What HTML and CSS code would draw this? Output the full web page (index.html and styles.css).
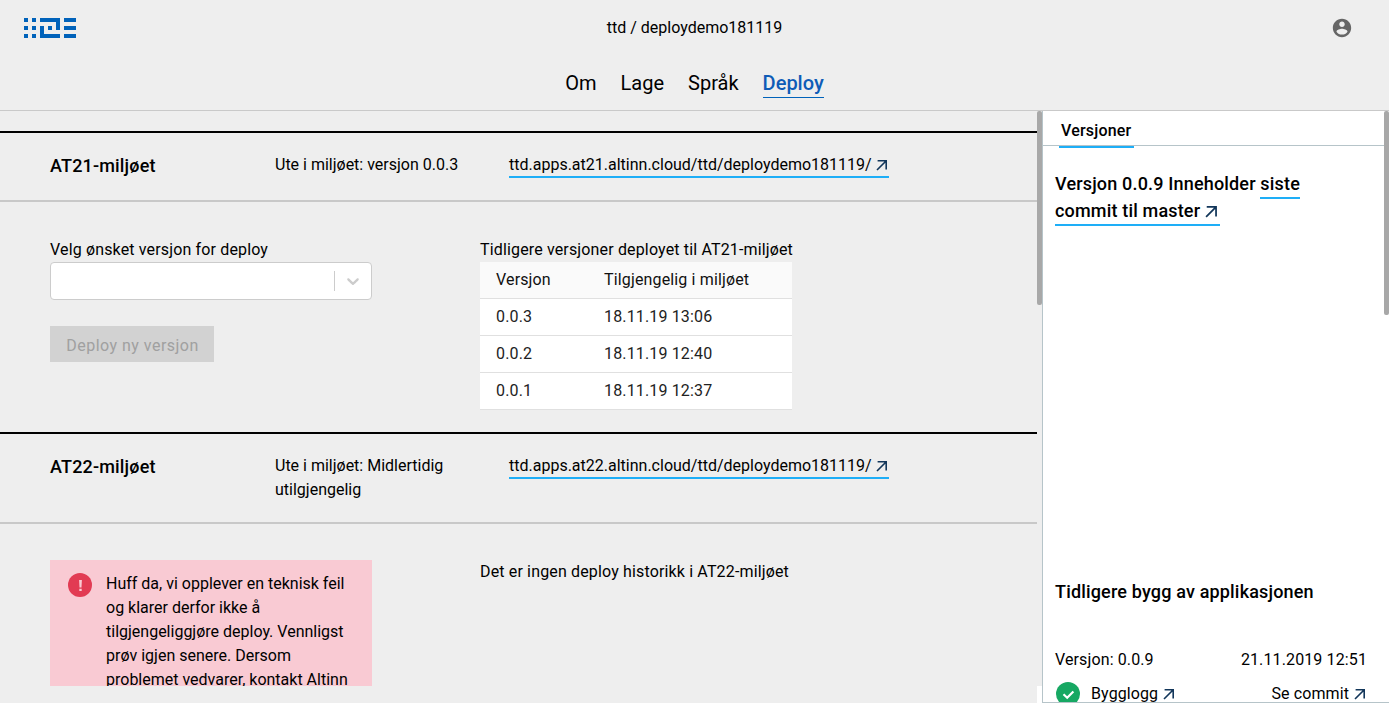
FILE: index.html
```html
<!DOCTYPE html>
<html lang="nb">
<head>
<meta charset="utf-8">
<title>Deploy</title>
<link rel="stylesheet" href="styles.css">
</head>
<body>
<svg class="symbols" width="0" height="0">
  <symbol id="arrow" viewBox="0 0 12 12"><path d="M1.600 1.800H10.200V10.600M10 2L1 11" fill="none" stroke="#12365a" stroke-width="1.600"/></symbol>
</svg>
<header class="top">
  <div class="top-row">
    <svg class="logo" width="52" height="20" viewBox="0 0 52 20" shape-rendering="crispEdges" fill="#0062ba">
      <path d="M0 0h4v4H0zM8 0h4v4H8zM0 8h4v4H0zM8 8h4v4H8zM0 16h4v4H0zM8 16h4v4H8zM16 0h20v12h-4V4H16zM16 8h4v8h16v4H16zM24 8h4v4h-4zM40 0h12v4H40zM40 8h12v4H40zM40 16h12v4H40z"/>
    </svg>
    <div class="repo">ttd / deploydemo181119</div>
    <svg class="user" width="22" height="22" viewBox="0 0 24 24" fill="#666"><path d="M12 2C6.48 2 2 6.48 2 12s4.48 10 10 10 10-4.48 10-10S17.52 2 12 2zm0 3c1.66 0 3 1.34 3 3s-1.34 3-3 3-3-1.34-3-3 1.340-3 3-3zm0 14.200c-2.500 0-4.710-1.280-6-3.220.03-1.990 4-3.080 6-3.080 1.990 0 5.970 1.090 6 3.080-1.290 1.940-3.500 3.220-6 3.220z"/></svg>
  </div>
  <nav class="tabs">
    <a class="tab">Om</a><a class="tab">Lage</a><a class="tab">Språk</a><a class="tab active">Deploy</a>
  </nav>
</header>
<div class="page">
  <main class="envs">
    <section class="env">
      <div class="env-head">
        <h2 class="env-name">AT21-miljøet</h2>
        <p class="env-status">Ute i miljøet: versjon 0.0.3</p>
        <div class="env-url"><a class="link">ttd.apps.at21.altinn.cloud/ttd/deploydemo181119/<svg class="arrow"><use href="#arrow"/></svg></a></div>
      </div>
      <div class="env-body">
        <div class="deploy">
          <label class="label">Velg ønsket versjon for deploy</label>
          <div class="select">
            <span class="divider"></span>
            <svg class="chevron" width="20" height="20" viewBox="0 0 20 20" fill="#ccc"><path d="M4.516 7.548c0.436-0.446 1.043-0.481 1.576 0l3.908 3.747 3.908-3.747c0.533-0.481 1.141-0.446 1.574 0 0.436 0.445 0.408 1.197 0 1.615-0.406 0.418-4.695 4.502-4.695 4.502-0.217 0.223-0.502 0.335-0.787 0.335s-0.570-0.112-0.789-0.335c0 0-4.287-4.084-4.695-4.502s-0.436-1.170 0-1.615z"/></svg>
          </div>
          <button class="btn" disabled>Deploy ny versjon</button>
        </div>
        <div class="history">
          <div class="label">Tidligere versjoner deployet til AT21-miljøet</div>
          <div class="table">
            <div class="tr th"><span>Versjon</span><span>Tilgjengelig i miljøet</span></div>
            <div class="tr"><span>0.0.3</span><span>18.11.19 13:06</span></div>
            <div class="tr"><span>0.0.2</span><span>18.11.19 12:40</span></div>
            <div class="tr"><span>0.0.1</span><span>18.11.19 12:37</span></div>
          </div>
        </div>
      </div>
    </section>
    <section class="env">
      <div class="env-head">
        <h2 class="env-name">AT22-miljøet</h2>
        <p class="env-status">Ute i miljøet: Midlertidig<br>utilgjengelig</p>
        <div class="env-url"><a class="link">ttd.apps.at22.altinn.cloud/ttd/deploydemo181119/<svg class="arrow"><use href="#arrow"/></svg></a></div>
      </div>
      <div class="env-body">
        <div class="alert">
          <svg class="alert-icon" width="24" height="24" viewBox="0 0 24 24"><circle cx="12" cy="12" r="12" fill="#e23b53"/><path d="M11.100 7h2.800l-.4 7.400h-2zM11.300 15.800h2.400v2.200h-2.400z" fill="#f9cad3"/></svg>
          <p class="alert-text">Huff da, vi opplever en teknisk feil<br>og klarer derfor ikke å<br>tilgjengeliggjøre deploy. Vennligst<br>prøv igjen senere. Dersom<br>problemet vedvarer, kontakt Altinn</p>
        </div>
        <p class="label">Det er ingen deploy historikk i AT22-miljøet</p>
      </div>
    </section>
  </main>
  <div class="gutter"><div class="thumb thumb-left"></div></div>
  <aside class="panel">
    <div class="panel-main">
      <div class="panel-tabs"><span class="panel-tab">Versjoner</span></div>
      <div class="panel-body">
        <h3 class="release">Versjon 0.0.9 Inneholder <a class="link">siste</a><br><a class="link">commit til master<svg class="arrow"><use href="#arrow"/></svg></a></h3>
        <h3 class="builds-title">Tidligere bygg av applikasjonen</h3>
        <div class="row build"><span>Versjon: 0.0.9</span><span>21.11.2019 12:51</span></div>
        <div class="row logs">
          <svg class="ok" width="24" height="24" viewBox="0 0 24 24"><circle cx="12" cy="12" r="12" fill="#17a863"/><path d="M7.500 12.200l3.700 3.500 6.200-6.200" fill="none" stroke="#fff" stroke-width="2.200"/></svg>
          <span class="log">Bygglogg<svg class="arrow"><use href="#arrow"/></svg></span>
          <span class="commit">Se commit<svg class="arrow"><use href="#arrow"/></svg></span>
        </div>
      </div>
    </div>
    <div class="thumb thumb-right"></div>
  </aside>
</div>
</body>
</html>
```
FILE: styles.css
```css
* { box-sizing: border-box; }
body, h2, h3, p { margin: 0; }
body {
  height: 703px;
  overflow: hidden;
  display: flex;
  flex-direction: column;
  background: #eee;
  color: #000;
  font: 400 16px/24px Roboto, sans-serif;
  white-space: nowrap;
}
svg { display: block; flex: none; }
.symbols { position: absolute; }

.top { height: 111px; border-bottom: 1px solid #c9c9c9; }
.top-row {
  display: grid;
  grid-template-columns: 1fr auto 1fr;
  align-items: center;
  height: 55px;
  padding: 0 36px 0 24px;
}
.repo { padding-left: 12px; }
.user { justify-self: end; }
.tabs { display: flex; justify-content: center; gap: 24px; padding-top: 13px; font-size: 20px; line-height: 31px; }
.tab { height: 30px; }
.tab.active { color: #0e5cb7; font-weight: 500; border-bottom: 1px solid #0062ba; }

.page { flex: 1; min-height: 0; display: flex; }
.envs { width: 1037px; height: 575px; padding-top: 20px; overflow: hidden; }
.env-head {
  display: grid;
  grid-template-columns: 225px 234px 1fr;
  min-height: 71px;
  padding: 20px 0 20px 50px;
  border-top: 2px solid #000;
  border-bottom: 2px solid #c8c8c8;
}
.env-name { margin-top: -1px; font-size: 18px; font-weight: 500; line-height: 27px; letter-spacing: 0.17px; }
.link { display: inline-block; height: 25px; border-bottom: 2px solid #1eaef7; }
.arrow { display: inline-block; width: 12px; height: 12px; margin: 0 1px 0 4px; vertical-align: -1px; }
.env-body {
  display: grid;
  grid-template-columns: 322px 312px;
  column-gap: 108px;
  align-items: start;
  height: 230px;
  padding: 36px 0 0 50px;
}
.label { display: block; height: 24px; letter-spacing: 0.15px; }
.select {
  display: flex;
  align-items: center;
  justify-content: flex-end;
  height: 38px;
  border: 1px solid #ccc;
  border-radius: 4px;
  background: #fff;
  padding-right: 8px;
}
.divider { width: 1px; height: 20px; margin-right: 8px; background: #ccc; }
.btn {
  display: block;
  width: 164px;
  height: 36px;
  margin-top: 26px;
  padding: 3px 0 0 1px;
  border: 0;
  background: #d2d2d2;
  color: #a0a0a0;
  font: 400 16px/24px Roboto, sans-serif;
  letter-spacing: 0.48px;
}
.table { background: #fff; letter-spacing: 0.15px; }
.tr { display: grid; grid-template-columns: 108px 1fr; height: 37px; padding: 6px 0 0 16px; border-bottom: 1px solid #e0e0e0; color: #222; }
.th { background: #fafafa; color: #111; }
.alert { display: flex; gap: 14px; height: 170px; padding: 12px 0 0 18px; background: #f9cad3; }
.alert-icon { margin-top: 1px; }

.gutter { width: 5px; height: 592px; border-bottom: 17px solid #fff; }
.thumb { width: 5px; background: #a8a8a8; border-radius: 2px; }
.thumb-left { height: 194px; }
.thumb-right { height: 204px; }
.panel { flex: 1; display: flex; background: #fff; border-left: 1px solid #b6c4c9; border-bottom: 1px solid #b6c4c9; }
.panel-main { width: 341px; }
.panel-tabs { height: 35px; padding-left: 16px; border-bottom: 1px solid #b6c4c9; }
.panel-tab { display: block; width: 75px; height: 37px; padding: 8px 2px 0; border-bottom: 2px solid #1eaef7; font-weight: 500; letter-spacing: 0.2px; }
.panel-body { padding: 24px 18px 0 12px; }
.release { height: 406px; font-size: 18px; font-weight: 500; line-height: 27px; letter-spacing: 0.17px; }
.release .link { height: 29px; margin-bottom: -2px; vertical-align: top; }
.release .arrow { width: 13px; height: 13px; margin: 0 2px 0 5px; }
.builds-title { margin-top: 2px; font-size: 18px; font-weight: 500; line-height: 27px; letter-spacing: 0.17px; }
.row { display: flex; justify-content: space-between; }
.build { margin-top: 43px; letter-spacing: 0.12px; }
.build span:last-child { margin-right: -1px; }
.logs { height: 20px; margin-top: 10px; padding-left: 1px; overflow: hidden; letter-spacing: 0.1px; }
.logs .arrow { margin: 0 0 0 5px; }
.log { flex: 1; padding-left: 11px; }
```
